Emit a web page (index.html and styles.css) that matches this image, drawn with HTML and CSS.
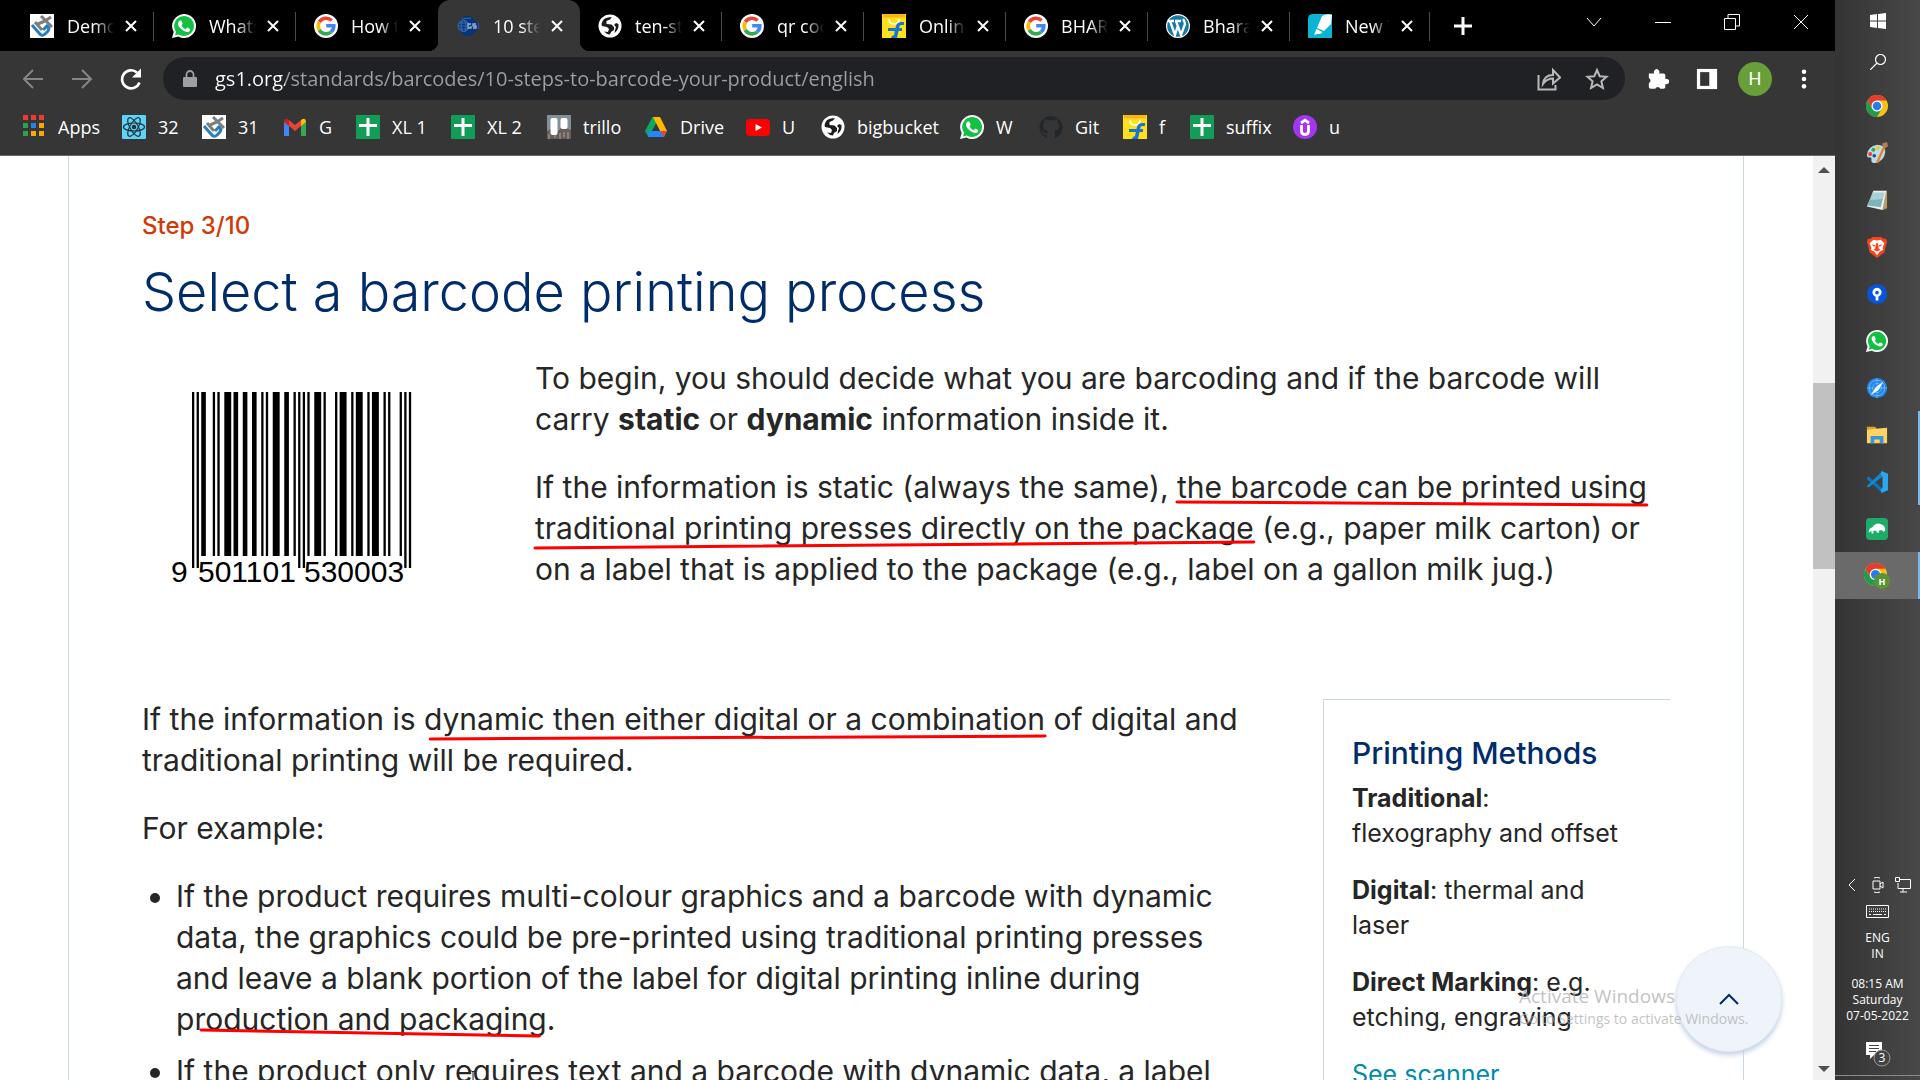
FILE: index.html
```html
<!DOCTYPE html>
<html lang="en">
<head>
<meta charset="utf-8">
<title>10 steps to barcode your product</title>
<link rel="stylesheet" href="styles.css">
</head>
<body>
<svg class="sprite" aria-hidden="true">
  <symbol id="hu" viewBox="0 0 24 24"><path fill="#fff" d="M0 0h24v24H0z"/><g fill="none" stroke-width="3"><path stroke="#7d7d7d" d="M11 2l5 5 6 6M5 8l7 8M8 10l7-3 6-4"/><path stroke="#2a7cba" d="M2 11l7 8q3 4 6 1l3-3q2-3-1-5l-4 4"/></g></symbol>
  <symbol id="whatsapp" viewBox="0 0 24 24"><path fill="#fff" d="M12 0a12 12 0 0 1 0 24q-3 0-5.700-1.500L0 24l1.700-6A12 12 0 0 1 12 0z"/><path fill="#12c144" d="M12 2a10 10 0 1 1-5.300 18.500L3 21.500l1-3.800A10 10 0 0 1 12 2z"/><path fill="#fff" d="M8 6.500h1.300l1.400 3.300-1.200 1.600q1.500 2.700 4.200 3.800l1.500-1.800 3 1.500q.2 2.800-3 3-3.500 0-6.900-3.600Q5.400 11 6.200 8.400 7 6.700 8 6.500z"/></symbol>
  <symbol id="google" viewBox="0 0 24 24"><circle cx="12" cy="12" r="12" fill="#fff"/><g fill="none" stroke-width="3.600"><path stroke="#ea4335" d="M17.600 6.600A7.800 7.800 0 0 0 5.300 8"/><path stroke="#fbbc05" d="M5.300 8a7.800 7.800 0 0 0 0 8"/><path stroke="#34a853" d="M5.300 16a7.800 7.800 0 0 0 11.800 2"/><path stroke="#4285f4" d="M17.100 18a7.800 7.800 0 0 0 2.700-6.200H12.200"/></g></symbol>
  <symbol id="gs1" viewBox="0 0 24 24"><path fill="#06357a" d="M12 2q4 0 8 5l2 5-2 5q-4 5-8 5-5 0-8-5l-2-5 2-5q3-5 8-5z"/><g fill="none" stroke="#3a6bb0" stroke-width="1"><circle cx="7.500" cy="12" r="5.500"/><ellipse cx="7.500" cy="12" rx="2.500" ry="5.500"/><path d="M2 12h9M3 9h9M3 15h9M6 5l9-1"/></g><path fill="none" stroke="#9db3d6" stroke-width="1.300" d="M15 10h-3v4h3v-2M20 10h-3v2h3v2h-3"/><path stroke="#2157a5" stroke-width="1.300" d="M22.500 9v6"/></symbol>
  <symbol id="globe" viewBox="0 0 24 24"><circle cx="12" cy="12" r="11.500" fill="#fff"/><path fill="#1c1c1c" d="M3.500 10Q4.500 4 11 3.200h3L12 5.500 8.500 7v3l5 .5 2.500 2.500v3L13 18l-1 2.500Q8 20 6 17.500l4 .5 1-3-2-2-5-1z"/><path fill="#1c1c1c" d="M20.500 10q.5 6-4 9l.5-3 1-3-2-2 2-2z"/></symbol>
  <symbol id="flip" viewBox="0 0 24 24"><path fill="#ffe11b" d="M0 0h24v24H0z"/><path fill="#fcb415" d="M1 0h22v3.500H1z"/><path fill="none" stroke="#fff" stroke-width="1.500" d="M7 5q0 5 5 5t5-5"/><path fill="#1876d2" d="M22 8v3h-3q-1.600 0-1.900 3H20v3h-3.500L15 24H9l1-2 2-1 .8-4H6v-3h7.500q.7-6 5.500-6z"/></symbol>
  <symbol id="wp" viewBox="0 0 24 24"><circle cx="12" cy="12" r="12" fill="#fff"/><circle cx="12" cy="12" r="10.800" fill="#1878a6"/><path fill="none" stroke="#fff" stroke-width="2.300" d="M4 7l5 14 3-10M10 7l5 14 4-11q0-2-2-5M2 7h6M9 7h6"/></symbol>
  <symbol id="marker" viewBox="0 0 24 24"><path fill="#09b5d3" d="M5 0h19v24H0V5q0-5 5-5z"/><path fill="#fff" d="M14 2q5-3 10-1l-1 9-7 7-7-3z"/><path fill="#fff" d="M8.500 15l6 3-2 2H9l-3 1z"/></symbol>
  <symbol id="apps" viewBox="0 0 24 24"><path fill="#ee3b30" d="M1 0h5v5H1zM9 0h5v5H9zM17 0h5v5h-5z"/><path fill="#2d9f54" d="M1 8h5v5H1zM1 16h5v5H1z"/><path fill="#2580ed" d="M9 8h5v5H9z"/><path fill="#f9a70b" d="M17 8h5v5h-5zM9 16h5v5H9zM17 16h5v5h-5z"/></symbol>
  <symbol id="react" viewBox="0 0 24 24"><rect width="24" height="24" rx="1" fill="#5ed4f6"/><g fill="none" stroke="#20303a" stroke-width="1.200"><ellipse cx="12" cy="12" rx="10.500" ry="4"/><ellipse cx="12" cy="12" rx="10.500" ry="4" transform="rotate(60 12 12)"/><ellipse cx="12" cy="12" rx="10.500" ry="4" transform="rotate(120 12 12)"/></g><circle cx="12" cy="12" r="2.200" fill="#20303a"/></symbol>
  <symbol id="gmail" viewBox="0 0 24 24"><path fill="#4285f4" d="M1 6v15h5V10z"/><path fill="#34a853" d="M18 10v11h5V6z"/><path fill="#c5221f" d="M1 6q1-4 5-1v6L1 7z"/><path fill="#fbbc04" d="M23 6q-1-4-5-1v6l5-4z"/><path fill="#ea4335" d="M6 5l6 5 6-5v6l-6 5-6-5z"/></symbol>
  <symbol id="sheet" viewBox="0 0 24 24"><rect width="24" height="24" rx="1" fill="#119c57"/><path fill="#fff" d="M10.500 3h3v6H21v3h-7.500v9h-3v-9H3V9h7.500z"/></symbol>
  <symbol id="trello" viewBox="0 0 24 24"><path fill="#81919a" d="M0 0h24v24H0z"/><path fill="#675d58" d="M0 16l6-3 4 4 5-5 9 3v9H0z"/><path stroke="#b1a49b" stroke-width="1" d="M2 24v-5M8 23v-3M13 24v-6M17 22v-5M21 24v-7"/><rect x="3.500" y="3" width="7" height="17" rx="2" fill="#fff"/><rect x="13.500" y="3" width="7" height="11" rx="2" fill="#fff"/></symbol>
  <symbol id="drive" viewBox="0 0 24 24"><path fill="#0da960" d="M8.500 2H16l-3 5-8.500 15L1 16z"/><path fill="#ffba00" d="M9 2h7l7 14h-7z"/><path fill="#2684fc" d="M4.500 16H23l-3 6H4z"/><path fill="#363636" d="M12 9l-4 7h8z"/><path fill="#ea4335" d="M16 16h7l-3 6z"/></symbol>
  <symbol id="youtube" viewBox="0 0 24 24"><rect x="0" y="4" width="24" height="17" rx="4" fill="#f00"/><path fill="#fff" d="M9.500 9l6.500 3.500L9.500 16z"/></symbol>
  <symbol id="github" viewBox="0 0 24 24"><path fill="#22272c" d="M12 1a11.500 11.500 0 0 0-4 22.300V20q-4 .7-4.500-2.500Q2 16 2 15.500q2-.5 3 2 1 1 3 .5l1-2Q4 15 4 10.500q0-2 1.500-3.500-.5-2 .2-3Q7 4 9 5.500q3-.8 6 0Q17 4 18.400 4q.8 1.500.2 3Q20 8.500 20 10.500q0 4.500-5 5.500 1 1 1 3v4.300A11.500 11.500 0 0 0 12 1z"/></symbol>
  <symbol id="udemy" viewBox="0 0 24 24"><circle cx="12" cy="12" r="12" fill="#a435f0"/><path fill="none" stroke="#fff" stroke-width="2.800" d="M8 8l4-2.800L16 8M8.500 10v6q0 3.500 3.500 3.500t3.500-3.500v-6"/></symbol>
  <symbol id="chrome" viewBox="0 0 24 24"><circle cx="12" cy="12" r="12" fill="#fbc116"/><path fill="#e33b2e" d="M1.600 6A12 12 0 0 1 22.400 6H12L7 15z"/><path fill="#229b4d" d="M1.600 6A12 12 0 0 0 12 24l5.200-9-5.200 3-5.200-3z"/><circle cx="12" cy="12" r="6" fill="#fff"/><circle cx="12" cy="12" r="4.700" fill="#2a7cee"/></symbol>
</svg>

<div class="desktop">
  <div class="browser">
    <header class="tabs">
      <nav class="tablist" aria-label="Open tabs">
        <div class="tab"><svg class="ico"><use href="#hu"/></svg><button class="name">Demo</button><button class="close" aria-label="Close"><svg viewBox="0 0 14 14"><path d="M2 2l10 10M12 2L2 12"/></svg></button></div>
        <div class="tab"><svg class="ico"><use href="#whatsapp"/></svg><button class="name">Whats</button><button class="close" aria-label="Close"><svg viewBox="0 0 14 14"><path d="M2 2l10 10M12 2L2 12"/></svg></button></div>
        <div class="tab plain"><svg class="ico"><use href="#google"/></svg><button class="name">How t</button><button class="close" aria-label="Close"><svg viewBox="0 0 14 14"><path d="M2 2l10 10M12 2L2 12"/></svg></button></div>
        <div class="tab active"><svg class="ico"><use href="#gs1"/></svg><button class="name">10 ste</button><button class="close" aria-label="Close"><svg viewBox="0 0 14 14"><path d="M2 2l10 10M12 2L2 12"/></svg></button></div>
        <div class="tab"><svg class="ico"><use href="#globe"/></svg><button class="name">ten-st</button><button class="close" aria-label="Close"><svg viewBox="0 0 14 14"><path d="M2 2l10 10M12 2L2 12"/></svg></button></div>
        <div class="tab"><svg class="ico"><use href="#google"/></svg><button class="name">qr coc</button><button class="close" aria-label="Close"><svg viewBox="0 0 14 14"><path d="M2 2l10 10M12 2L2 12"/></svg></button></div>
        <div class="tab"><svg class="ico"><use href="#flip"/></svg><button class="name">Online</button><button class="close" aria-label="Close"><svg viewBox="0 0 14 14"><path d="M2 2l10 10M12 2L2 12"/></svg></button></div>
        <div class="tab"><svg class="ico"><use href="#google"/></svg><button class="name">BHAR</button><button class="close" aria-label="Close"><svg viewBox="0 0 14 14"><path d="M2 2l10 10M12 2L2 12"/></svg></button></div>
        <div class="tab"><svg class="ico"><use href="#wp"/></svg><button class="name">Bhara</button><button class="close" aria-label="Close"><svg viewBox="0 0 14 14"><path d="M2 2l10 10M12 2L2 12"/></svg></button></div>
        <div class="tab"><svg class="ico"><use href="#marker"/></svg><button class="name">New T</button><button class="close" aria-label="Close"><svg viewBox="0 0 14 14"><path d="M2 2l10 10M12 2L2 12"/></svg></button></div>
      </nav>
      <button class="newtab" aria-label="New tab"><svg viewBox="0 0 18 18"><path d="M9 0v18M0 9h18"/></svg></button>
      <div class="wincontrols">
        <button aria-label="Search tabs"><svg viewBox="0 0 16 16"><path d="M1 4l7 8 7-8"/></svg></button>
        <button aria-label="Minimize"><svg viewBox="0 0 16 16"><path d="M0 8.500h16"/></svg></button>
        <button aria-label="Restore"><svg viewBox="0 0 16 16"><path d="M.5 4.500h11v11H.5zM4 4V.5h11.500V12H12"/></svg></button>
        <button aria-label="Close window"><svg viewBox="0 0 16 16"><path d="M1 1l14 14M15 1L1 15"/></svg></button>
      </div>
    </header>

    <div class="toolbar">
      <div class="navbuttons">
        <button class="dim" aria-label="Back"><svg viewBox="0 0 24 24"><path d="M22 12H3M12 3l-9 9 9 9"/></svg></button>
        <button class="dim" aria-label="Forward"><svg viewBox="0 0 24 24"><path d="M2 12h19M12 3l9 9-9 9"/></svg></button>
        <button aria-label="Reload"><svg viewBox="0 0 24 24"><path stroke-width="2.600" d="M20.500 15.500a9 9 0 1 1-2.500-10"/><path fill="#fff" stroke="none" d="M22 1.500v9h-9z"/></svg></button>
      </div>
      <div class="omnibox">
        <svg class="lock" viewBox="0 0 16 18"><path fill="#9aa0a6" d="M2 7h12q1 0 1 1v8q0 1-1 1H2q-1 0-1-1V8q0-1 1-1z"/><path fill="none" stroke="#9aa0a6" stroke-width="1.800" d="M4.500 7V4.500a3.500 3.500 0 0 1 7 0V7"/></svg>
        <input class="url" type="text" aria-label="Address" value="gs1.org/standards/barcodes/10-steps-to-barcode-your-product/english">
        <button aria-label="Share"><svg viewBox="0 0 24 24"><path d="M1.500 8v14.500h17V18"/><path d="M6 17q1-9 10-9V3l7 7.500-7 6v-5q-6 0-10 5.500z"/></svg></button>
        <button aria-label="Bookmark"><svg viewBox="0 0 24 24"><path d="M12 3l2.700 6.200 6.800.6-5.100 4.500 1.500 6.700-5.900-3.500L6.100 21l1.500-6.700-5.100-4.500 6.800-.6z"/></svg></button>
      </div>
      <div class="extras">
        <button aria-label="Extensions"><svg viewBox="0 0 24 24"><path fill="#fff" d="M2 6h6a3 3 0 1 1 5 0h5q2 0 2 2v4a3 3 0 1 1 0 5.500V21q0 1.500-2 1.500h-3.500a3 3 0 0 0-5.500 0H4q-2 0-2-2v-4a3 3 0 0 0 0-5.500z"/></svg></button>
        <button aria-label="Side panel"><svg viewBox="0 0 24 24"><path fill="#fff" d="M1 1h22v22H1z"/><path fill="#363636" d="M4.500 4.500h10v15h-10z"/></svg></button>
        <button class="avatar">H</button>
        <button aria-label="Menu"><svg viewBox="0 0 24 24"><g fill="#fff"><circle cx="12" cy="4" r="2.500"/><circle cx="12" cy="12" r="2.500"/><circle cx="12" cy="20" r="2.500"/></g></svg></button>
      </div>
    </div>

    <nav class="bookmarks" aria-label="Bookmarks">
      <a href="#a"><svg class="ico"><use href="#apps"/></svg>Apps</a>
      <a href="#a"><svg class="ico"><use href="#react"/></svg>32</a>
      <a href="#a"><svg class="ico"><use href="#hu"/></svg>31</a>
      <a href="#a"><svg class="ico"><use href="#gmail"/></svg>G</a>
      <a href="#a"><svg class="ico"><use href="#sheet"/></svg>XL 1</a>
      <a href="#a"><svg class="ico"><use href="#sheet"/></svg>XL 2</a>
      <a href="#a"><svg class="ico"><use href="#trello"/></svg>trillo</a>
      <a href="#a"><svg class="ico"><use href="#drive"/></svg>Drive</a>
      <a href="#a"><svg class="ico"><use href="#youtube"/></svg>U</a>
      <a href="#a"><svg class="ico"><use href="#globe"/></svg>bigbucket</a>
      <a href="#a"><svg class="ico"><use href="#whatsapp"/></svg>W</a>
      <a href="#a"><svg class="ico"><use href="#github"/></svg>Git</a>
      <a href="#a"><svg class="ico"><use href="#flip"/></svg>f</a>
      <a href="#a"><svg class="ico"><use href="#sheet"/></svg>suffix</a>
      <a href="#a"><svg class="ico"><use href="#udemy"/></svg>u</a>
    </nav>

    <div class="viewport">
      <main class="page">
        <article class="card">
          <p class="step">Step 3/10</p>
          <h1>Select a barcode printing process</h1>
          <section class="intro">
            <svg class="barcode" viewBox="0 0 250 200" role="img" aria-label="EAN-13 barcode">
              <g transform="translate(22 4) scale(2.307 1)">
                <path d="M4 0h2v164h-2zM9 0h1v164h-1zM11 0h1v164h-1zM14 0h3v164h-3zM18 0h2v164h-2zM22 0h2v164h-2zM26 0h2v164h-2zM30 0h1v164h-1zM32 0h1v164h-1zM35 0h3v164h-3zM40 0h2v164h-2zM44 0h1v164h-1zM50 0h1v164h-1zM53 0h3v164h-3zM57 0h1v164h-1zM62 0h1v164h-1zM64 0h3v164h-3zM69 0h1v164h-1zM71 0h3v164h-3zM76 0h1v164h-1zM78 0h3v164h-3zM83 0h1v164h-1zM85 0h1v164h-1zM90 0h1v164h-1z"/>
                <path d="M0 0h1v176h-1zM2 0h1v176h-1zM46 0h1v176h-1zM48 0h1v176h-1zM92 0h1v176h-1zM94 0h1v176h-1z"/>
              </g>
              <text x="1" y="194">9</text><text x="28" y="194">501101</text><text x="134" y="194">530003</text>
            </svg>
            <div class="copy">
              <p>To begin, you should decide what you are barcoding and if the barcode will<br>carry <strong>static</strong> or <strong>dynamic</strong> information inside it.</p>
              <p>If the information is static (always the same), <span class="mark">the barcode can be printed using<svg viewBox="0 0 100 12" preserveAspectRatio="none"><path d="M0 4L100 7"/></svg></span><br><span class="mark">traditional printing presses directly on the package<svg viewBox="0 0 100 12" preserveAspectRatio="none"><path d="M0 9L100 3"/></svg></span> (e.g., paper milk carton) or<br>on a label that is applied to the package (e.g., label on a gallon milk jug.)</p>
            </div>
          </section>
          <section class="detail">
            <div class="copy">
              <p>If the information is <span class="mark">dynamic then either digital or a combination<svg viewBox="0 0 100 12" preserveAspectRatio="none"><path d="M1 9L100 6"/></svg></span> of digital and<br>traditional printing will be required.</p>
              <p>For example:</p>
              <ul>
                <li>If the product requires multi-colour graphics and a barcode with dynamic<br>data, the graphics could be pre-printed using traditional printing presses<br>and leave a blank portion of the label for digital printing inline during<br>p<span class="mark">roduction and packaging<svg viewBox="0 0 100 12" preserveAspectRatio="none"><path d="M2 0L98 6"/></svg></span>.</li>
                <li>If the product only requires text and a barcode with dynamic data, a label</li>
              </ul>
            </div>
            <aside>
              <h2>Printing Methods</h2>
              <p><strong>Traditional</strong>:<br>flexography and offset</p>
              <p><strong>Digital</strong>: thermal and<br>laser</p>
              <p><strong>Direct Marking</strong>: e.g.<br>etching, engraving</p>
              <p><a href="#scanner">See scanner</a></p>
            </aside>
          </section>
        </article>
        <button class="totop" aria-label="Back to top"><svg viewBox="0 0 20 12"><path d="M1 11l9-9 9 9"/></svg></button>
        <div class="watermark"><p class="big">Activate Windows</p><p>Go to Settings to activate Windows.</p></div>
        <svg class="cursor" viewBox="0 0 8 10"><path d="M1 1h2l1 1 1-1h2M4 2v8"/></svg>
      </main>
      <div class="scrollbar">
        <svg viewBox="0 0 12 6"><path d="M0 6l6-6 6 6z"/></svg>
        <div class="track"><div class="thumb"></div></div>
        <svg viewBox="0 0 12 6"><path d="M0 0l6 6 6-6z"/></svg>
      </div>
    </div>
  </div>

  <aside class="taskbar">
    <button class="sys" aria-label="Start"><svg viewBox="0 0 16 16"><path fill="#fff" d="M0 2l7-1v6.500H0zM8 .9L16 0v7.500H8zM0 8.500h7V15l-7-1zM8 8.500h8V16l-8-1z"/></svg></button>
    <button class="sys" aria-label="Search"><svg viewBox="0 0 16 16"><g fill="none" stroke="#fff" stroke-width="1.200"><circle cx="10.500" cy="5.500" r="5"/><path d="M7 9l-7 7"/></g></svg></button>
    <nav class="apps" aria-label="Taskbar apps">
      <button aria-label="Chrome"><svg><use href="#chrome"/></svg></button>
      <button aria-label="Paint"><svg viewBox="0 0 24 24"><path fill="#b8dcf0" d="M1 14Q2 5 12 3q9 0 9 8-1 10-11 12-5 0-4-4 0-3-3-2-2 0-2-3z"/><circle cx="4.500" cy="13" r="2.200" fill="#e8443a"/><circle cx="8" cy="8.500" r="2.200" fill="#42a846"/><circle cx="13" cy="6.500" r="2.200" fill="#f2c62b"/><circle cx="9" cy="15" r="2" fill="#31516e"/><path stroke="#e58524" stroke-width="2.500" d="M12 23l8-18"/><path fill="#b5804e" d="M17 2l6-2 1 5-4 2z"/></svg></button>
      <button aria-label="Notepad"><svg viewBox="0 0 24 24"><path fill="#b49d69" d="M9 3l14-1v19l-5 2z"/><path fill="#e9f1ef" d="M8 2h14l-4 21-17-4z"/><path fill="#7db4bb" d="M8 4h12l-4 16L1 18z"/><path fill="#a9d0d4" d="M8 4h12l-2 7-13 1z"/></svg></button>
      <button aria-label="Brave"><svg viewBox="0 0 24 24"><path fill="#f9431b" d="M7 1h10l2 2h3l1 4-1 2-2 9-8 6-8-6-2-9-1-2 1-4h3z"/><path fill="#fff" d="M8 4l4 1 4-1 4 4-2 5 1 2-4 2-3 4-3-4-4-2 1-2-2-5z"/><path fill="#f9431b" d="M6 9l4 1-1 2zM18 9l-4 1 1 2zM11 8h2l1 6 2 1-4 2-4-2 2-1z"/></svg></button>
      <button aria-label="Sourcetree"><svg viewBox="0 0 24 24"><circle cx="12" cy="12" r="11" fill="#0755d9"/><path fill="#fff" d="M10.500 19v-4a5 5 0 1 1 3 0v4z"/><circle cx="12" cy="10.500" r="2" fill="#0755d9"/></svg></button>
      <button aria-label="WhatsApp"><svg><use href="#whatsapp"/></svg></button>
      <button aria-label="Compass"><svg viewBox="0 0 24 24"><circle cx="12" cy="12" r="11" fill="#1d87ed"/><g fill="none" stroke="#7fc0f5" stroke-width=".8"><circle cx="12" cy="12" r="8.500"/><circle cx="12" cy="12" r="5"/><path d="M1 12h22M12 1v22"/></g><path fill="#fff" d="M19 5l-5 9-9 6 6-9z"/></svg></button>
      <button class="open" aria-label="File Explorer"><svg viewBox="0 0 24 24"><path fill="#e9a315" d="M1 3h9l2 3H1z"/><path fill="#fdd365" d="M1 6l22-2v17H1z"/><path fill="#3a97dc" d="M5 13h14v8h-4v-4H9v4H5z"/></svg></button>
      <button class="open" aria-label="VS Code"><svg viewBox="0 0 24 24"><path fill="#0b76b9" d="M1 7l2-1 15 13v5L1 9z"/><path fill="#1486cc" d="M1 16L18 0v6L3 18l-2-1z"/><path fill="#2aa6f2" d="M17 0l7 3v18l-7 3-1-3 2-3V6l-2-3z"/></svg></button>
      <button aria-label="Green app"><svg viewBox="0 0 24 24"><rect width="24" height="24" rx="4" fill="#1bad68"/><path fill="#fff" d="M3 15q0-4 4-5 4-6 10-3 4 1 4 7l-2 1q-1-1-2-2l-3 1v2h-2l-1-2H8v3H6v-3l-3 2z"/></svg></button>
      <button class="open current" aria-label="Chrome, H"><svg viewBox="0 0 26 26"><use href="#chrome" width="23" height="23"/><circle cx="18" cy="18" r="8" fill="#5b9435"/><text x="18" y="22">H</text></svg></button>
    </nav>
    <div class="tray">
      <div class="trayrow">
        <svg viewBox="0 0 16 16"><path d="M10 2L4 8l6 6"/></svg>
        <svg viewBox="0 0 16 16"><path d="M3 4h7v8H3zM10 7l3-2v6l-3-2M4 1q3-1.500 6 0M4 15q3 1.500 6 0"/></svg>
        <svg viewBox="0 0 16 16"><path d="M4 2.500h11.500v9H3V6M8 12v3M5 15h7M.5.500h4v4h-4z"/></svg>
      </div>
      <svg class="keyboard" viewBox="0 0 23 13"><path d="M.5.500h22v12H.5z"/><path stroke-dasharray="1 1" d="M3 4h17M3 6.500h17"/><path d="M3 9.500h2M7 9.500h9M18 9.500h2"/></svg>
      <p>ENG<br>IN</p>
      <p class="clock">08:15 AM<br>Saturday<br>07-05-2022</p>
      <svg class="notice" viewBox="0 0 26 26"><path fill="#fff" stroke="none" d="M1 1h16v13H9l-4 4v-4H1z"/><path stroke="#444" d="M4 4.500h10M4 7.500h10M4 10.500h7"/><circle cx="17" cy="17" r="8" fill="#444" stroke="#999"/><text x="17" y="21">3</text></svg>
    </div>
  </aside>
</div>
</body>
</html>
```
FILE: styles.css
```css
* { box-sizing: border-box; }
body { margin: 0; font-family: "Open Sans", "Noto Sans", sans-serif; }
p, h1, h2, ul { margin: 0; }
button { border: 0; padding: 0; background: none; color: inherit; font: inherit; display: flex; align-items: center; justify-content: center; }
svg { display: block; flex: none; }
.sprite { display: none; }
.ico { width: 24px; height: 24px; }

.desktop { display: flex; height: 100vh; overflow: hidden; }
.browser { flex: 1; min-width: 0; display: flex; flex-direction: column; background: #363636; color: #fff; }

/* Tab strip */
.tabs { display: flex; align-items: center; height: 51px; background: #000; font-size: 18px; }
.tablist { display: flex; align-self: stretch; padding-left: 12px; }
.tab { position: relative; display: flex; align-items: center; width: 142px; padding: 0 16px 0 18px; }
.tab::after { content: ""; position: absolute; right: 0; top: 12px; width: 1px; height: 29px; background: #4a4a4a; }
.tab.plain::after { display: none; }
.tab.active { background: #363636; border-radius: 12px 12px 0 0; }
.tab.active::before, .tab.active::after { content: ""; position: absolute; top: auto; bottom: 0; width: 9px; height: 9px; }
.tab.active::before { left: -9px; background: radial-gradient(circle at 0 0, #000 9px, #363636 9px); }
.tab.active::after { right: -9px; background: radial-gradient(circle at 100% 0, #000 9px, #363636 9px); }
.tab:last-child { width: 140px; }
.name { flex: 1; min-width: 0; margin-left: 13px; justify-content: flex-start; overflow: hidden; white-space: nowrap; mask-image: linear-gradient(90deg, #000 60%, transparent); }
.close { width: 14px; height: 14px; margin-left: 10px; }
.close svg { width: 14px; height: 14px; fill: none; stroke: #fff; stroke-width: 2; }
.newtab { width: 18px; margin-left: 24px; }
.newtab svg { width: 18px; height: 18px; stroke: #fff; stroke-width: 3; }
.wincontrols { display: flex; margin-left: auto; padding-bottom: 8px; }
.wincontrols button { width: 69px; height: 40px; }
.wincontrols svg { width: 16px; height: 16px; fill: none; stroke: #fff; stroke-width: 1; }

/* Address row */
.toolbar { display: flex; align-items: center; height: 54px; padding: 1px 7px 0 8px; }
.navbuttons, .extras { display: flex; align-items: center; }
.navbuttons button, .extras button { width: 49px; height: 40px; }
.navbuttons svg, .omnibox button svg { width: 24px; height: 24px; fill: none; stroke: #fff; stroke-width: 2; }
.navbuttons .dim svg { stroke: #868686; }
.omnibox { flex: 1; display: flex; align-items: center; height: 43px; margin: 0 8px; padding: 0 4px 0 19px; border-radius: 22px; background: #202124; }
.lock { width: 16px; height: 20px; }
.url { flex: 1; min-width: 0; margin-left: 17px; padding: 0; border: 0; outline: 0; font: 20px/28px "Open Sans", "Noto Sans", sans-serif; color: transparent; background: linear-gradient(90deg, #fff 70px, #9aa0a6 70px); background-clip: text; }
.omnibox button { width: 48px; height: 40px; }
.omnibox button svg { stroke: #b9b9b9; }
.extras svg { width: 22px; height: 22px; }
.extras .avatar { width: 34px; height: 34px; margin: 0 7px; border-radius: 50%; background: #689f38; font-family: Roboto, sans-serif; font-size: 18px; }

/* Bookmarks */
.bookmarks { display: grid; grid-template-columns: 100px 80px 81px 73px 95px 96px 97px 102px 75px 139px 79px 84px 67px 103px auto; align-items: center; height: 51px; padding: 0 0 6px 22px; border-bottom: 1px solid #6b6767; font-size: 18px; }
.bookmarks a { display: flex; align-items: center; gap: 12px; color: #fff; text-decoration: none; white-space: nowrap; }

/* Web page */
.viewport { flex: 1; min-height: 0; display: flex; background: #fff; color: #262626; font-family: Inter, sans-serif; }
.page { position: relative; flex: 1; min-width: 0; overflow: hidden; }
.card { margin: 0 69px 0 68px; padding: 54px 73px 0; min-height: 100%; border: solid #c8d8ea; border-width: 0 1px; }
.step { color: #d03a08; font-size: 24px; line-height: 32px; font-weight: 500; }
h1 { margin-top: 18px; color: #002c6c; font-size: 54px; line-height: 64px; font-weight: 300; }
.copy { font-size: 30px; line-height: 41px; white-space: nowrap; }
.copy p { margin-bottom: 27px; }
.intro { display: flex; margin-top: 34px; min-height: 341px; }
.intro .copy { margin-left: 115px; }
.barcode { width: 250px; height: 200px; margin: 30px 0 0 28px; font: 30px "Liberation Sans", sans-serif; }
.detail { display: flex; justify-content: space-between; align-items: flex-start; }
ul { padding-left: 34px; }
li { margin-bottom: 11px; }
.mark { position: relative; }
.mark svg { position: absolute; left: 0; bottom: -5px; width: 100%; height: 12px; fill: none; stroke: #f00; stroke-width: 3; overflow: visible; }
.mark path { vector-effect: non-scaling-stroke; stroke-linecap: round; }
aside h2 { color: #002c6c; font-size: 30px; line-height: 41px; font-weight: 500; margin-bottom: 7px; }
.detail aside { width: 347px; min-height: 440px; padding: 33px 0 0 28px; border: solid #c8d8ea; border-width: 1px 0 0 1px; font-size: 25px; line-height: 35px; }
.detail aside p { margin-bottom: 22px; }
aside a { color: #008aab; text-decoration: none; }
strong { font-weight: 700; }
.totop { position: absolute; right: 31px; bottom: 28px; width: 106px; height: 106px; border-radius: 50%; border: 1px solid #e2ebf7; background: #eef4f9; box-shadow: 0 3px 5px #c3d0e4; }
.totop svg { width: 20px; height: 12px; fill: none; stroke: #002c6c; stroke-width: 2; }
.watermark { position: absolute; right: 57px; bottom: 51px; width: 237px; font: 14px/20px "Open Sans", sans-serif; color: #aaaaaab8; white-space: nowrap; pointer-events: none; }
.watermark .big { font-size: 19px; line-height: 26px; }
.cursor { position: absolute; left: 469px; bottom: 0; width: 8px; height: 10px; fill: none; stroke: #222; }
.scrollbar { width: 22px; display: flex; flex-direction: column; align-items: center; padding: 11px 0 8px; background: #f1f1f1; }
.scrollbar svg { width: 12px; height: 6px; fill: #505050; }
.track { flex: 1; align-self: stretch; padding-top: 210px; }
.thumb { height: 186px; background: #c1c1c1; }

/* Taskbar */
.taskbar { width: 85px; display: flex; flex-direction: column; background: linear-gradient(90deg, #343434, #484848); color: #fff; }
.sys { height: 41px; }
.sys svg { width: 16px; height: 16px; }
.apps button { width: 85px; height: 47px; border-right: 2px solid transparent; }
.apps button svg { width: 22px; height: 22px; }
.apps .open { border-color: #76b9ed; }
.apps .current { background: #6a6a6a; }
.apps .current svg { width: 26px; height: 26px; }
.apps text { font: 700 9px "Open Sans", sans-serif; fill: #fff; text-anchor: middle; }
.tray { margin-top: auto; display: flex; flex-direction: column; align-items: center; gap: 12px; padding-bottom: 8px; border-bottom: 1px solid #8a8a8a; margin-bottom: 4px; font-size: 12px; line-height: 16px; text-align: center; }
.tray svg { fill: none; stroke: #fff; }
.trayrow { display: flex; gap: 9px; }
.trayrow svg { width: 16px; height: 16px; }
.keyboard { width: 23px; height: 13px; }
.clock { margin-top: 2px; }
.notice { width: 26px; height: 26px; margin-top: 5px; }
.notice text { font: 12px "Open Sans", sans-serif; fill: #fff; stroke: none; text-anchor: middle; }
```
